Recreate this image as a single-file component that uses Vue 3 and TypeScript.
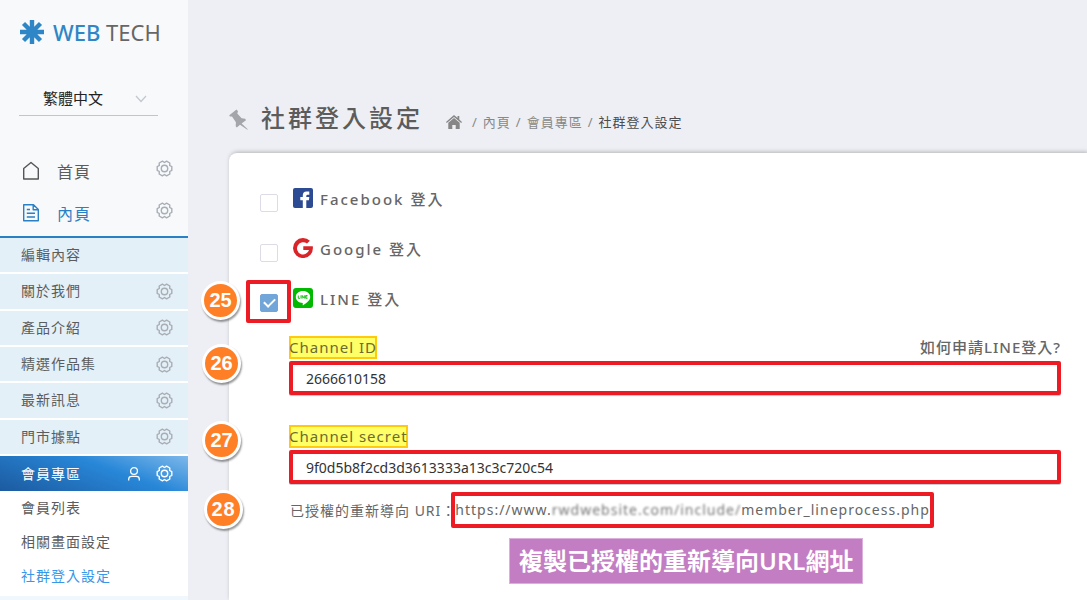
<script setup lang="ts">
import { ref } from 'vue'

interface MenuItem {
  label: string
  gear: boolean
}

const menu: MenuItem[] = [
  { label: '編輯內容', gear: false },
  { label: '關於我們', gear: true },
  { label: '產品介紹', gear: true },
  { label: '精選作品集', gear: true },
  { label: '最新訊息', gear: true },
  { label: '門市據點', gear: true },
]

const subMenu = ['會員列表', '相關畫面設定', '社群登入設定']
const current = '社群登入設定'

const gearPath =
  'M7.3-1.9V1.9L5.2 3L5.3 5.5L2.1 7.3L0 6L-2.1 7.3L-5.3 5.5L-5.2 3L-7.3 1.9V-1.9L-5.2-3L-5.3-5.5L-2.1-7.3L0-6L2.1-7.3L5.3-5.5L5.2-3Z'

const facebook = ref(false)
const google = ref(false)
const line = ref(true)
const channelId = ref('2666610158')
const channelSecret = ref('9f0d5b8f2cd3d3613333a13c3c720c54')
</script>

<template>
  <div class="page" lang="zh-Hant">
    <aside class="sidebar">
      <a class="logo" href="#">
        <svg width="24" height="24" viewBox="-12 -12 24 24" aria-hidden="true">
          <path
            d="M0-12V12M-12 0H12M-8.5-8.5L8.5 8.5M-8.5 8.5L8.5-8.5"
            stroke="#2f86c6"
            stroke-width="4.4"
          />
        </svg>
        <span><b>WEB</b> TECH</span>
      </a>

      <div class="language">
        <select aria-label="語言">
          <option>繁體中文</option>
        </select>
        <svg width="12" height="8" viewBox="0 0 12 8" aria-hidden="true">
          <path d="M1 1L6 6.5L11 1" fill="none" stroke="#c3c6cd" stroke-width="1.2" />
        </svg>
      </div>

      <nav>
        <div class="top-item">
          <svg class="top-icon" width="18" height="20" viewBox="0 0 18 20" aria-hidden="true">
            <path d="M1.700 18V7.500L9 1.500L16.300 7.500V18Z" fill="none" stroke="#555" stroke-width="1.400" stroke-linejoin="round" />
          </svg>
          <a href="#">首頁</a>
          <button class="gear" aria-label="設定">
            <svg width="17" height="17" viewBox="-8.500 -8.500 17 17">
              <path :d="gearPath" /><circle r="3.200" />
            </svg>
          </button>
        </div>
        <div class="top-item selected">
          <svg class="top-icon" width="18" height="20" viewBox="0 0 18 20" aria-hidden="true">
            <path
              d="M1.700 1.700H11.500L16.300 6.500V17.800H1.700ZM11.200 2V6.800H16M4.800 6.500H8M4.800 10.300H13M4.800 14H13"
              fill="none"
              stroke="#2a80c5"
              stroke-width="1.400"
              stroke-linejoin="round"
            />
          </svg>
          <a href="#">內頁</a>
          <button class="gear" aria-label="設定">
            <svg width="17" height="17" viewBox="-8.500 -8.500 17 17">
              <path :d="gearPath" /><circle r="3.200" />
            </svg>
          </button>
        </div>

        <div class="menu">
          <div v-for="item in menu" :key="item.label" class="menu-item">
            <a href="#">{{ item.label }}</a>
            <button v-if="item.gear" class="gear" aria-label="設定">
              <svg width="17" height="17" viewBox="-8.500 -8.500 17 17">
                <path :d="gearPath" /><circle r="3.200" />
              </svg>
            </button>
          </div>
        </div>

        <div class="menu-item active">
          <a href="#">會員專區</a>
          <svg class="user" width="14" height="16" viewBox="0 0 14 16" aria-hidden="true">
            <circle cx="7" cy="5" r="3.400" />
            <path d="M1.700 14.500V13Q1.700 10.300 4.800 10.300H9.200Q12.300 10.300 12.300 13V14.500" />
          </svg>
          <button class="gear" aria-label="設定">
            <svg width="17" height="17" viewBox="-8.500 -8.500 17 17">
              <path :d="gearPath" /><circle r="3.200" />
            </svg>
          </button>
        </div>
        <div class="sub-menu">
          <a v-for="s in subMenu" :key="s" href="#" :class="{ current: s === current }">{{ s }}</a>
        </div>
      </nav>
      <div class="rest"></div>
    </aside>

    <main>
      <header class="heading">
        <svg class="pin" width="20" height="21" viewBox="0 0 20 21" aria-hidden="true">
          <path
            d="M7.500 0.500L9 2.300L8.300 4.600L12.600 9.300L16.200 9.800L17 11.200L12.600 14.600L19 20.600L18 20.600L11 15.700L7.800 18.500L6.700 17.300L6.900 13.200L3 7.600L0.800 7.500L0.300 6.200Z"
            fill="#a3a5ab"
          />
        </svg>
        <h1>社群登入設定</h1>
        <nav class="crumbs" aria-label="breadcrumb">
          <a class="home" href="#" aria-label="首頁">
            <svg width="16" height="14" viewBox="0 0 16 14" aria-hidden="true">
              <path d="M8 0L11.500 3V1H13.300V4.600L16 7L15.200 8L8 1.900L0.800 8L0 7Z" fill="#868686" />
              <path d="M8 3L13.700 7.800V14H9.700V10H6.300V14H2.300V7.800Z" fill="#868686" />
            </svg>
          </a>
          <span>/</span>
          <a href="#">內頁</a>
          <span>/</span>
          <a href="#">會員專區</a>
          <span>/</span>
          <em>社群登入設定</em>
        </nav>
      </header>

      <section class="panel">
        <div class="providers">
          <div class="provider">
            <input id="facebook" v-model="facebook" type="checkbox" />
            <label for="facebook">
              <svg width="20" height="20" viewBox="0 0 20 20" aria-hidden="true">
                <rect width="20" height="20" rx="2" fill="#2c4b93" />
                <path
                  d="M9.800 20V12.200H7.300V8.900H9.800V7.300Q9.800 3.500 13.500 3.500H16.300V6.800H14.700Q13.300 6.800 13.300 8.100V8.900H16.300L15.900 12.200H13.300V20Z"
                  fill="#fff"
                />
              </svg>
              Facebook 登入
            </label>
          </div>
          <div class="provider">
            <input id="google" v-model="google" type="checkbox" />
            <label for="google">
              <svg width="20" height="20" viewBox="0 0 20 20" aria-hidden="true">
                <path
                  d="M16.900 2.800L14 5.600A6.100 6.100 0 1 0 16 12H10.300V8.200H19.800Q20.500 13.200 17.500 16.700A10 10 0 1 1 16.900 2.800Z"
                  fill="#d9252a"
                />
              </svg>
              Google 登入
            </label>
          </div>
          <div class="provider">
            <input id="line" v-model="line" type="checkbox" />
            <label for="line">
              <svg width="20" height="20" viewBox="0 0 20 20" aria-hidden="true">
                <rect width="20" height="20" rx="3" fill="#00b900" />
                <path
                  d="M10 3C14 3 17.200 5.600 17.200 8.900C17.200 12.300 13.500 14.700 10.300 17.200C9.800 17.500 9.600 17.200 9.700 16.700L9.800 14.900C5.800 14.700 2.800 12.200 2.800 8.900C2.800 5.600 6 3 10 3Z"
                  fill="#fff"
                />
                <path
                  d="M5.300 7.500V10.300H7M8 7.300V10.500M9.200 10.500V7.500L11.300 10.300V7.300M14.500 7.500H12.700V10.300H14.500M12.700 8.900H14.300"
                  fill="none"
                  stroke="#00b900"
                  stroke-width="0.900"
                />
              </svg>
              LINE 登入
            </label>
            <span class="frame"></span>
            <span class="badge badge-check">25</span>
          </div>
        </div>

        <div class="fields">
          <div class="field">
            <div class="field-head">
              <label for="channel-id">Channel ID</label>
              <a href="#">如何申請LINE登入?</a>
            </div>
            <input id="channel-id" v-model="channelId" type="text" />
            <span class="badge badge-id">26</span>
          </div>
          <div class="field">
            <div class="field-head">
              <label for="channel-secret">Channel secret</label>
            </div>
            <input id="channel-secret" v-model="channelSecret" type="text" />
            <span class="badge badge-secret">27</span>
          </div>
        </div>

        <div class="uri">
          <span class="uri-label">已授權的重新導向 URI：</span>
          <span class="uri-value">https://www.<span class="masked">rwdwebsite.com/include/</span>member_lineprocess.php</span>
          <span class="badge badge-uri">28</span>
        </div>

        <p class="note">複製已授權的重新導向URL網址</p>
      </section>
    </main>
  </div>
</template>

<style>
body {
  margin: 0;
  background: #eeeff4;
}
</style>

<style scoped>
.page,
.page input,
.page select {
  font-family: 'Noto Sans', 'Noto Sans CJK TC', sans-serif;
}

.page {
  display: flex;
  min-height: 100vh;
  background: #eeeff4;
  color: #5c5c5c;
  font-size: 14px;
}

.page * {
  box-sizing: border-box;
}

a {
  color: inherit;
  text-decoration: none;
}

.sidebar {
  display: flex;
  flex: none;
  flex-direction: column;
  width: 188px;
  background: #f7f9fb;
}

.logo {
  display: flex;
  align-items: center;
  gap: 9px;
  height: 64px;
  padding-left: 20px;
  color: #666;
  font-size: 22px;
  line-height: 28px;
  white-space: nowrap;
}

.logo b {
  color: #2f86c6;
  font-weight: 500;
}

.language {
  display: flex;
  align-items: center;
  height: 34px;
  margin: 18px 30px 0 19px;
  padding-right: 11px;
  border-bottom: 1px solid #c3c5ca;
}

.language select {
  flex: 1;
  min-width: 0;
  padding: 0 0 2px 24px;
  border: 0;
  appearance: none;
  background: none;
  color: #222;
  font-size: 15px;
}

.top-item {
  display: flex;
  align-items: center;
  height: 42px;
  padding: 0 15px 0 22px;
  font-size: 16px;
  letter-spacing: 1px;
}

nav > .top-item:first-child {
  margin-top: 34px;
}

.top-item > a {
  margin-left: 17px;
}

.top-item.selected {
  height: 44px;
  padding-bottom: 2px;
  color: #2a80c5;
}

.gear {
  display: flex;
  margin-left: auto;
  padding: 0;
  border: 0;
  background: none;
  color: #a9adb4;
}

.gear svg {
  fill: none;
  stroke: currentColor;
  stroke-width: 1.4;
  stroke-linejoin: round;
}

.top-item .gear {
  margin-bottom: 5px;
}

.menu {
  display: grid;
  grid-auto-rows: 1fr;
  gap: 2px;
  height: 220px;
  padding-bottom: 2px;
  border-top: 2px solid #2a80c5;
  background: #fff;
}

.menu-item {
  display: flex;
  align-items: center;
  padding: 0 15px 0 21px;
  background: #e3f0f8;
  letter-spacing: 1px;
}

.menu-item > a {
  padding-bottom: 2px;
}

.menu-item.active {
  height: 35px;
  background: linear-gradient(20deg, #1c5a9f, #2887d8 60%, #7db8ea);
  color: #fff;
}

.user {
  margin-left: auto;
  fill: none;
  stroke: #fff;
  stroke-width: 1.3;
}

.active .gear {
  margin-left: 15px;
  color: #fff;
}

.sub-menu {
  display: flex;
  flex-direction: column;
  padding-bottom: 3px;
  background: #fff;
}

.sub-menu a {
  padding-left: 21px;
  letter-spacing: 1px;
  line-height: 34px;
}

.sub-menu .current {
  color: #3797e8;
}

.rest {
  flex: 1;
  background: #f0f8fd;
}

main {
  display: flex;
  flex: 1;
  flex-direction: column;
  min-width: 0;
  padding-left: 41px;
}

.heading {
  display: flex;
  align-items: center;
  height: 36px;
  margin: 101px 0 16px;
}

h1 {
  margin: 0 0 0 12px;
  padding-bottom: 5px;
  font-size: 24px;
  font-weight: 500;
  letter-spacing: 3px;
  white-space: nowrap;
}

.crumbs {
  display: flex;
  align-items: center;
  gap: 5px;
  margin: 5px 0 0 23px;
  color: #888;
  font-size: 13px;
  letter-spacing: 1px;
  white-space: nowrap;
}

.home {
  margin-right: 5px;
}

.crumbs svg {
  display: block;
}

.crumbs em {
  color: #4c4c4c;
  font-style: normal;
}

.panel {
  flex: 1;
  padding: 35px 26px 16px 31px;
  border-radius: 8px 0 0 0;
  background: #fff;
  box-shadow: 1px -1px 4px rgba(0, 0, 0, 0.25);
}

.providers {
  display: grid;
  gap: 26px;
}

.provider {
  position: relative;
  display: flex;
  align-items: flex-start;
  gap: 15px;
  height: 24px;
}

.provider input {
  width: 18px;
  height: 18px;
  margin: 6px 0 0;
  border: 1px solid #dcdce6;
  border-radius: 2px;
  appearance: none;
  background: #fff;
}

.provider input:checked {
  border-color: #72a5d8;
  background: #72a5d8;
}

.provider input:checked::after {
  display: block;
  width: 5px;
  height: 9px;
  margin: 1px auto 0;
  border: solid #fff;
  border-width: 0 2px 2px 0;
  content: '';
  transform: rotate(45deg);
}

.provider label {
  display: flex;
  align-items: center;
  gap: 7px;
  height: 20px;
  color: #666;
  font-size: 15px;
  font-weight: 500;
  letter-spacing: 2px;
}

.frame {
  position: absolute;
  top: -8px;
  left: -14px;
  width: 45px;
  height: 43px;
  border: 4px solid #ed1c24;
  border-radius: 2px;
  pointer-events: none;
}

.badge {
  position: absolute;
  width: 39px;
  height: 39px;
  border: 3px solid #fff;
  border-radius: 50%;
  background: #ff7f27;
  box-shadow: 1px 2px 2px rgba(0, 0, 0, 0.4);
  color: #fff;
  font-family: 'Liberation Sans', sans-serif;
  font-size: 20px;
  font-weight: bold;
  line-height: 33px;
  text-align: center;
}

.badge-check {
  top: -7px;
  left: -59px;
}

.badge-id {
  top: 8px;
  left: -87px;
}

.badge-secret {
  top: -4px;
  left: -87px;
}

.badge-uri {
  top: -2px;
  left: -85px;
}

.fields {
  display: grid;
  gap: 30px;
  margin: 24px 0 0 29px;
}

.field {
  position: relative;
}

.field-head {
  display: flex;
  align-items: center;
  justify-content: space-between;
  height: 23px;
  margin-bottom: 2px;
  font-size: 15px;
  letter-spacing: 1px;
}

.field-head label {
  height: 23px;
  background: #ffff66;
  box-shadow: inset 0 0 0 2px #ffc90e;
  color: #6b6b33;
  line-height: 23px;
}

.field-head a {
  padding-bottom: 2px;
  color: #666;
  font-weight: 500;
}

.field input {
  display: block;
  width: 100%;
  height: 34px;
  padding: 0 13px;
  border: 4px solid #ed1c24;
  border-radius: 2px;
  background: #fff;
  box-shadow: 0 1px 0 #c8ccd6;
  color: #333;
  font-size: 14px;
}

.uri {
  position: relative;
  display: flex;
  align-items: center;
  height: 36px;
  margin: 8px 0 0 29px;
  color: #666;
  letter-spacing: 1px;
  white-space: nowrap;
}

.uri-label {
  padding-left: 1px;
}

.uri-value {
  height: 36px;
  margin-left: -5px;
  border: 4px solid #ed1c24;
  border-radius: 2px;
  line-height: 28px;
}

.masked {
  color: #777;
  filter: blur(1px);
}

.note {
  width: fit-content;
  margin: 10px 0 0 249px;
  padding: 0 9px;
  border: 1px solid #dcb0dc;
  background: #c37dc3;
  color: #fff;
  font-size: 24px;
  font-weight: 600;
  line-height: 44px;
  white-space: nowrap;
}
</style>
